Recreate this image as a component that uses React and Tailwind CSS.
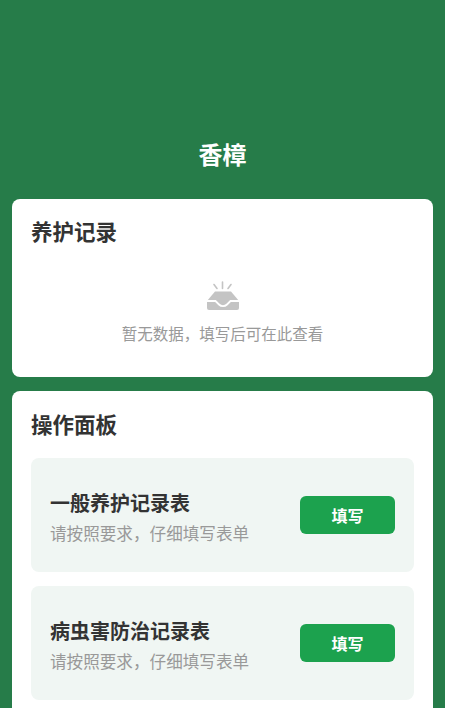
function Item({ title }) {
  return (
    <div className="flex h-[114px] items-center justify-between rounded-lg bg-[#f0f6f3] px-[19px]">
      <div className="flex flex-col pt-[4px]">
        <div className="text-[20px] leading-[30px] font-bold text-[#333333]">{title}</div>
        <div className="mt-[2px] text-[16.6px] leading-[27px] text-[#999999]">{"请按照要求\uFF0C仔细填写表单"}</div>
      </div>
      <button className="flex h-[38px] w-[95px] items-center justify-center rounded-md bg-[#1ca24e] text-[16px] font-bold text-white">填写</button>
    </div>
  );
}

export default function App() {
  return (
    <div className="h-[708px] w-[452px] overflow-hidden bg-white font-['Noto_Sans_CJK_SC','Noto_Sans',sans-serif]">
      <div className="h-full w-[445px] bg-[#267c49] px-3 pt-[136px]">
        <h1 className="text-center text-[24px] leading-[36px] font-bold text-white">香樟</h1>
        <section className="mt-[27px] h-[178px] rounded-lg bg-white px-[19px] pt-[16px]">
          <h2 className="text-[21.5px] leading-[32px] font-bold text-[#333333]">养护记录</h2>
          <div className="mt-[34px] flex flex-col items-center">
            <svg width="34" height="30" viewBox="0 0 34 30" fill="none">
              <path d="M16.500 1v6.500M8 3.500l3 4M25 3.500l-3 4" stroke="#c4c4c4" strokeWidth="1.600" strokeLinecap="round" />
              <path d="M9 10.500h16l8 9.500v7a2 2 0 0 1-2 2H3a2 2 0 0 1-2-2v-7z" fill="#c4c4c4" />
              <path d="M1 20h8.500l3.500 3.500c1 1 2.500 1.700 4 1.700s3-.7 4-1.700l3.500-3.500H33" stroke="#ffffff" strokeWidth="1.800" />
            </svg>
            <p className="mt-[10px] text-[15.5px] leading-[24px] text-[#999999]">{"暂无数据\uFF0C填写后可在此查看"}</p>
          </div>
        </section>
        <section className="mt-[14px] rounded-lg bg-white px-[19px] pt-[17px] pb-5">
          <h2 className="text-[21.5px] leading-[32px] font-bold text-[#333333]">操作面板</h2>
          <div className="mt-[18px] flex flex-col gap-[14px]">
            <Item title="一般养护记录表" />
            <Item title="病虫害防治记录表" />
          </div>
        </section>
      </div>
    </div>
  );
}
